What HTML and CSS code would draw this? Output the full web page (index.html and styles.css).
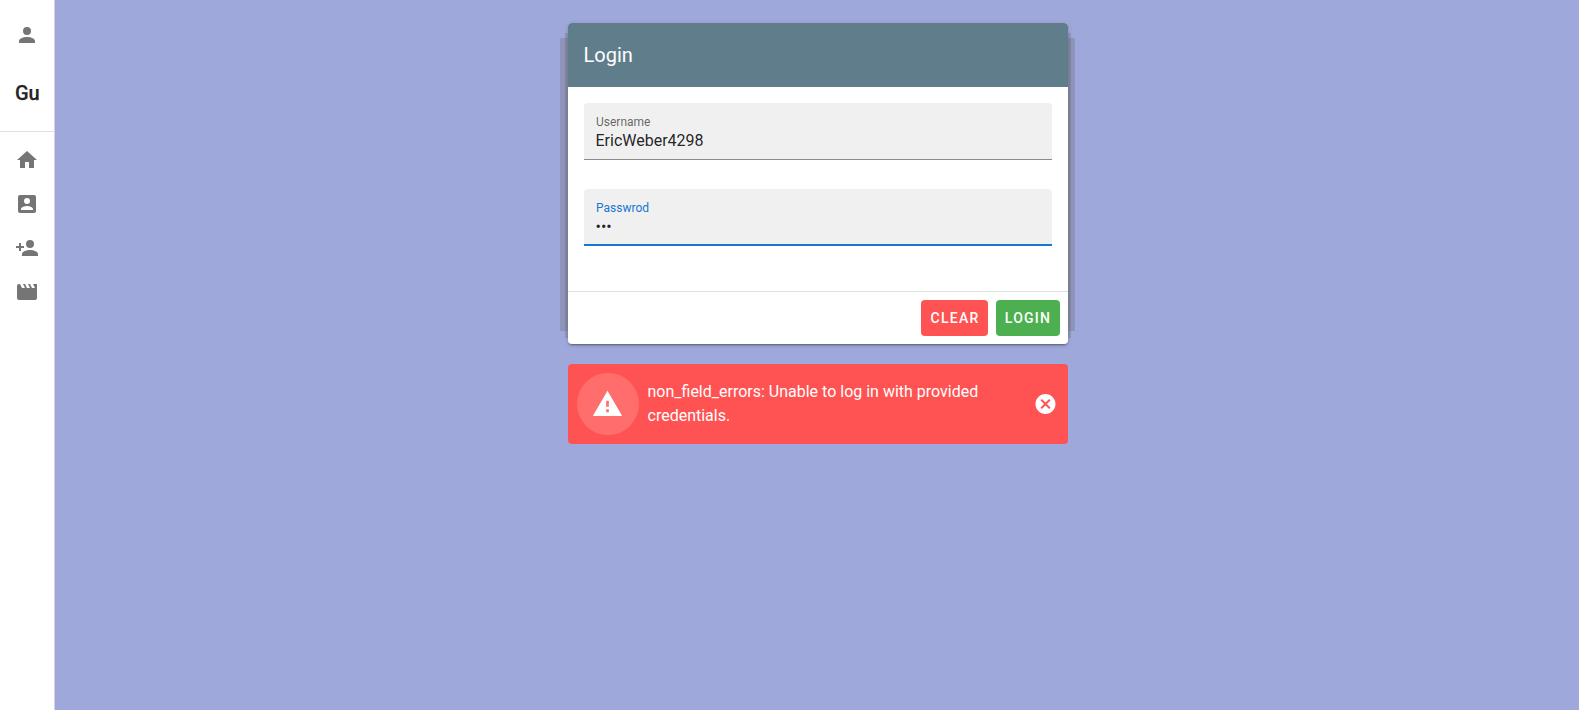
FILE: index.html
```html
<!DOCTYPE html>
<html lang="en">
<head>
<meta charset="utf-8">
<title>Login</title>
<link rel="stylesheet" href="styles.css">
</head>
<body>
<div class="app">
  <nav class="drawer">
    <div class="drawer-item drawer-user"><svg class="icon" viewBox="0 0 24 24"><path d="M12,4A4,4 0 0,1 16,8A4,4 0 0,1 12,12A4,4 0 0,1 8,8A4,4 0 0,1 12,4M12,14C16.42,14 20,15.79 20,18V20H4V18C4,15.79 7.58,14 12,14Z"/></svg></div>
    <div class="drawer-name">Gu</div>
    <div class="drawer-links">
      <a class="drawer-item"><svg class="icon" viewBox="0 0 24 24"><path d="M10,20V14H14V20H19V12H22L12,3L2,12H5V20H10Z"/></svg></a>
      <a class="drawer-item"><svg class="icon" viewBox="0 0 24 24"><path d="M6,17C6,15 10,13.9 12,13.9C14,13.9 18,15 18,17V18H6M15,9A3,3 0 0,1 12,12A3,3 0 0,1 9,9A3,3 0 0,1 12,6A3,3 0 0,1 15,9M3,5V19A2,2 0 0,0 5,21H19A2,2 0 0,0 21,19V5A2,2 0 0,0 19,3H5C3.89,3 3,3.9 3,5Z"/></svg></a>
      <a class="drawer-item"><svg class="icon" viewBox="0 0 24 24"><path d="M15,14C12.33,14 7,15.33 7,18V20H23V18C23,15.33 17.67,14 15,14M6,10V7H4V10H1V12H4V15H6V12H9V10M15,12A4,4 0 0,0 19,8A4,4 0 0,0 15,4A4,4 0 0,0 11,8A4,4 0 0,0 15,12Z"/></svg></a>
      <a class="drawer-item"><svg class="icon" viewBox="0 0 24 24"><path d="M18,4L20,8H17L15,4H13L15,8H12L10,4H8L10,8H7L5,4H4A2,2 0 0,0 2,6V18A2,2 0 0,0 4,20H20A2,2 0 0,0 22,18V4H18Z"/></svg></a>
    </div>
  </nav>
  <main class="content">
    <div class="column">
      <div class="stack">
        <form class="card">
          <header class="card-title">Login</header>
          <div class="card-body">
            <label class="field">
              <span class="field-label">Username</span>
              <input class="field-input" type="text" value="EricWeber4298">
            </label>
            <label class="field field-active">
              <span class="field-label">Passwrod</span>
              <input class="field-input" type="password" value="abc">
            </label>
          </div>
          <footer class="card-actions">
            <button class="btn btn-clear" type="button">CLEAR</button>
            <button class="btn btn-login" type="button">LOGIN</button>
          </footer>
        </form>
      </div>
      <div class="alert" role="alert">
        <div class="alert-badge"><svg class="alert-icon" viewBox="0 0 24 24"><path d="M13,14H11V9.6H13M13,18.2H11V16H13M1,21H23L12,2L1,21Z"/></svg></div>
        <div class="alert-text">non_field_errors: Unable to log in with provided credentials.</div>
        <svg class="icon alert-close" viewBox="0 0 24 24"><path d="M12,2C17.53,2 22,6.47 22,12C22,17.53 17.53,22 12,22C6.47,22 2,17.53 2,12C2,6.47 6.47,2 12,2M15.59,7L12,10.59L8.41,7L7,8.41L10.59,12L7,15.59L8.41,17L12,13.41L15.59,17L17,15.59L13.41,12L17,8.41L15.59,7Z"/></svg>
      </div>
    </div>
  </main>
</div>
</body>
</html>
```
FILE: styles.css
```css
* { box-sizing: border-box; }
body {
  margin: 0;
  font-family: Roboto, sans-serif;
  font-size: 16px;
  line-height: 1.5;
  color: rgba(0, 0, 0, 0.87);
}
.app { display: flex; height: 100vh; background: #9fa8da; overflow: hidden; }
.drawer {
  width: 55px;
  flex: none;
  background: #fff;
  border-right: 1px solid #d5d5d5;
}
.drawer-item { display: flex; justify-content: center; align-items: center; height: 44px; }
.drawer-user { height: 70px; }
.drawer-name {
  height: 62px;
  padding: 8px 0 0 .5px;
  border-bottom: 1px solid #e0e0e0;
  font-size: 20px;
  font-weight: 500;
  text-align: center;
  -webkit-text-stroke: .25px currentColor;
}
.drawer-links { padding-top: 6px; }
.icon { display: block; width: 24px; height: 24px; fill: #757575; }
.content { flex: 1; display: flex; justify-content: center; padding: 23px 0 0 1px; }
.column { width: 500px; }
.stack { position: relative; z-index: 0; height: 321px; margin-bottom: 20px; }
/* Offset sheets peeking out from behind the card */
.stack::before, .stack::after {
  content: "";
  position: absolute;
  z-index: -1;
  background: rgba(96, 96, 96, 0.26);
}
.stack::before { inset: 15px -7px 13px -8px; }
.stack::after { inset: 10px -3px 6px; }
.card {
  display: flex;
  flex-direction: column;
  height: 100%;
  background: #fff;
  border-radius: 4px;
  overflow: hidden;
  box-shadow: 0 3px 1px -2px rgba(0, 0, 0, .2), 0 2px 2px 0 rgba(0, 0, 0, .14), 0 1px 5px 0 rgba(0, 0, 0, .12);
}
.card-title {
  height: 64px;
  padding: 0 16px;
  background: #607d8b;
  color: #fff;
  font-size: 20px;
  line-height: 64px;
}
.card-body { flex: 1; padding: 16px; display: flex; flex-direction: column; gap: 29px; }
.field {
  display: block;
  height: 57px;
  flex: none;
  padding: 10px 12px 0;
  background: #f0f0f0;
  border-radius: 4px 4px 0 0;
  box-shadow: inset 0 -1px #8b8b8b;
}
.field-active { box-shadow: inset 0 -2px #1976d2; }
.field-label { display: block; padding-left: .5px; font-size: 12px; line-height: 18px; color: rgba(0, 0, 0, .6); }
.field-active .field-label { color: #1976d2; }
.field-input {
  display: block;
  width: 100%;
  height: 20px;
  margin: 0;
  padding: 0;
  border: 0;
  outline: 0;
  background: none;
  color: rgba(0, 0, 0, .87);
  font: 16px/20px Roboto, sans-serif;
}
.card-actions {
  display: flex;
  justify-content: flex-end;
  gap: 8px;
  height: 53px;
  padding: 8px;
  border-top: 1px solid #e0e0e0;
}
.btn {
  height: 36px;
  padding: 0 0 0 1px;
  border: 0;
  border-radius: 4px;
  color: #fff;
  font: 500 14px/36px Roboto, sans-serif;
  letter-spacing: 1.25px;
}
.btn-clear { width: 67px; padding-left: 2px; background: #ff5252; }
.btn-login { width: 64px; background: #4caf50; }
.alert {
  display: flex;
  align-items: center;
  height: 80px;
  padding: 0 11px 0 9px;
  border-radius: 4px;
  background: #ff5252;
  color: #fff;
}
.alert-badge {
  display: flex;
  align-items: center;
  justify-content: center;
  flex: none;
  width: 62px;
  height: 62px;
  margin-right: 9px;
  border-radius: 50%;
  background: rgba(255, 255, 255, .16);
}
.alert-icon { width: 32px; height: 32px; margin-right: 1px; fill: #fff; transform: translateX(.5px); }
.alert-text { flex: 1; padding-right: 40px; }
.alert-close { flex: none; fill: #fff; transform: translateX(.5px); }
```
